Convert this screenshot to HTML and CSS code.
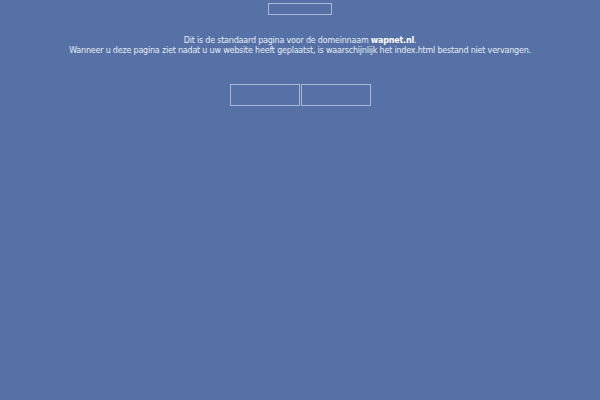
FILE: index.html
```html
<!DOCTYPE html>
<html>
<head>
<meta charset="utf-8">
<link rel="stylesheet" href="styles.css">
</head>
<body>
<div class="page">
  <div class="topbox"></div>
  <p class="msg">Dit is de standaard pagina voor de domeinnaam <b>wapnet.nl</b>.<br>Wanneer u deze pagina ziet nadat u uw website heeft geplaatst, is waarschijnlijk het index.html bestand niet vervangen.</p>
  <div class="boxes">
    <div class="box"></div>
    <div class="box"></div>
  </div>
</div>
</body>
</html>
```
FILE: styles.css
```css
html, body {
  margin: 0;
  padding: 0;
  background: #5571a5;
  height: 100%;
}
.page {
  display: flex;
  flex-direction: column;
  align-items: center;
  padding-top: 3px;
}
.topbox {
  width: 62px;
  height: 10px;
  border: 1px solid #a9b8d6;
}
.msg {
  margin: 21px 0 0 0;
  font-family: "DejaVu Sans", Verdana, sans-serif;
  font-size: 8px;
  line-height: 10px;
  letter-spacing: -0.2px;
  color: #e9edf5;
  text-align: center;
}
.msg b {
  color: #ffffff;
}
.boxes {
  display: flex;
  gap: 1px;
  margin-top: 28px;
  margin-left: 1px;
}
.box {
  width: 68px;
  height: 20px;
  border: 1px solid #a9b8d6;
}
```
